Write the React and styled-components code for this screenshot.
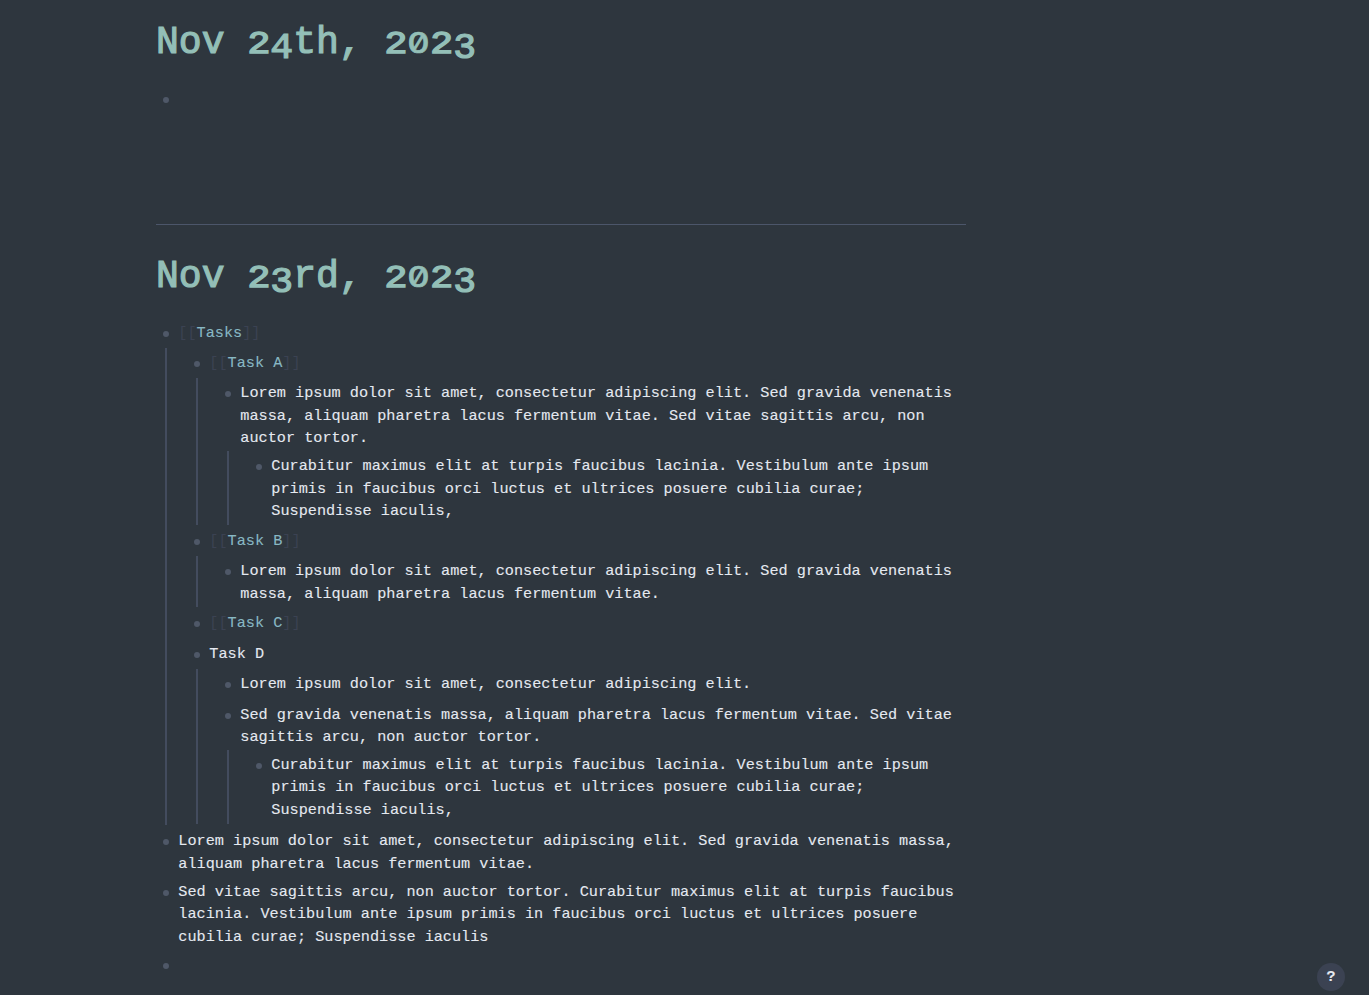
import React from "react";
import styled, { createGlobalStyle, css } from "styled-components";

const GlobalStyle = createGlobalStyle`
  html, body { margin: 0; background: #2e363e; }
  body { height: 995px; overflow: hidden; }
`;

const Page = styled.main`
  box-sizing: border-box;
  width: 100%;
  height: 995px;
  overflow: hidden;
  padding: 14px 0 0 156px;
  background: #2e363e;
  color: #e5e9f0;
  font-family: "Liberation Mono", monospace;
  font-size: 15.21px;
  line-height: 22.8px;
  -webkit-text-stroke: 0.1px currentColor;
`;

const Journal = styled.section`
  width: 810px;
  box-sizing: border-box;
  height: ${(p) => p.$height || "auto"};
`;

const Divider = styled.hr`
  width: 810px;
  height: 1px;
  margin: 0 0 23px;
  border: 0;
  background: #4c566a;
`;

const Title = styled.h1`
  box-sizing: border-box;
  height: 54px;
  padding-top: 2px;
  margin: 0 0 15.85px;
  color: #93bfb7;
  font-size: 38.1px;
  line-height: 54px;
  font-weight: 400;
  white-space: pre;
  -webkit-text-stroke: 1.2px #93bfb7;
`;

/* Old-style numerals: 0-2 sit at x-height, 3-5 hang below the baseline. */
const Digit = styled.span`
  display: inline-block;
  width: 22.86px;
  text-align: center;
  transform-origin: 50% 37.2px;
  transform: ${(p) => (p.$hang ? "translateY(5px) scaleY(0.96)" : "scaleY(0.8)")};
  -webkit-text-stroke-width: ${(p) => (p.$hang ? "1.3px" : "1.8px")};
  ${(p) =>
    p.$zero &&
    css`
      font-family: Inter, sans-serif;
      font-weight: 500;
      font-size: 35px;
      -webkit-text-stroke-width: 0.8px;
      font-feature-settings: "zero" 1;
      vertical-align: top;
      transform-origin: 50% 39.7px;
      transform: translateY(-2.6px) scale(0.97, 0.8);
    `}
`;

const List = styled.div`
  ${(p) =>
    p.$nested &&
    css`
      margin-left: 9px;
      padding-left: 20px;
      border-left: 2px solid #434c5e;
    `}
`;

const Block = styled.div`
  padding-bottom: 0.8px;
`;

const Row = styled.div`
  display: flex;
  box-sizing: border-box;
  min-height: 30.1px;
  padding: 3.8px 0 0.7px;
`;

const BulletCell = styled.span`
  flex: 0 0 22.3px;
  height: 22.8px;
  box-sizing: border-box;
  padding: 9.2px 0 0 7px;
`;

const Bullet = styled.span`
  display: block;
  width: 6px;
  height: 6px;
  border-radius: 50%;
  background: #4f5868;
`;

const Text = styled.span`
  flex: 1;
  min-width: 0;
`;

const Bracket = styled.span`
  color: #3b4252;
`;

const PageLink = styled.span`
  color: #88b8c4;
`;

const Help = styled.button`
  position: fixed;
  right: 24px;
  bottom: 4px;
  width: 28px;
  height: 28px;
  padding: 2px 0 0;
  border: 0;
  border-radius: 50%;
  background: #3b4252;
  color: #e5e9f0;
  font: bold 15px/26px "Liberation Mono", monospace;
`;

const lorem = "Lorem ipsum dolor sit amet, consectetur adipiscing elit.";
const curabitur =
  "Curabitur maximus elit at turpis faucibus lacinia. Vestibulum ante ipsum primis in faucibus orci luctus et ultrices posuere cubilia curae; Suspendisse iaculis";

const blocks = [
  {
    link: "Tasks",
    children: [
      {
        link: "Task A",
        children: [
          {
            text: `${lorem} Sed gravida venenatis massa, aliquam pharetra lacus fermentum vitae. Sed vitae sagittis arcu, non auctor tortor.`,
            children: [{ text: `${curabitur},` }],
          },
        ],
      },
      {
        link: "Task B",
        children: [
          { text: `${lorem} Sed gravida venenatis massa, aliquam pharetra lacus fermentum vitae.` },
        ],
      },
      { link: "Task C" },
      {
        text: "Task D",
        children: [
          { text: lorem },
          {
            text: "Sed gravida venenatis massa, aliquam pharetra lacus fermentum vitae. Sed vitae sagittis arcu, non auctor tortor.",
            children: [{ text: `${curabitur},` }],
          },
        ],
      },
    ],
  },
  { text: `${lorem} Sed gravida venenatis massa, aliquam pharetra lacus fermentum vitae.` },
  { text: `Sed vitae sagittis arcu, non auctor tortor. ${curabitur}` },
  { text: "" },
];

function Blocks({ items, nested }) {
  return (
    <List $nested={nested}>
      {items.map((b, i) => (
        <Block key={i}>
          <Row>
            <BulletCell>
              <Bullet />
            </BulletCell>
            <Text>
              {b.link ? (
                <>
                  <Bracket>[[</Bracket>
                  <PageLink>{b.link}</PageLink>
                  <Bracket>]]</Bracket>
                </>
              ) : (
                b.text
              )}
            </Text>
          </Row>
          {b.children && <Blocks items={b.children} nested />}
        </Block>
      ))}
    </List>
  );
}

function DateTitle({ children }) {
  return (
    <Title>
      {children.split("").map((c, i) =>
        /\d/.test(c) ? (
          <Digit key={i} $hang={c === "3" || c === "4"} $zero={c === "0"}>
            {c}
          </Digit>
        ) : (
          c
        )
      )}
    </Title>
  );
}

export default function App() {
  return (
    <>
      <GlobalStyle />
      <Page>
        <Journal $height="210px">
          <DateTitle>Nov 24th, 2023</DateTitle>
          <Blocks items={[{ text: "" }]} />
        </Journal>
        <Divider />
        <Journal>
          <DateTitle>Nov 23rd, 2023</DateTitle>
          <Blocks items={blocks} />
        </Journal>
        <Help>?</Help>
      </Page>
    </>
  );
}
